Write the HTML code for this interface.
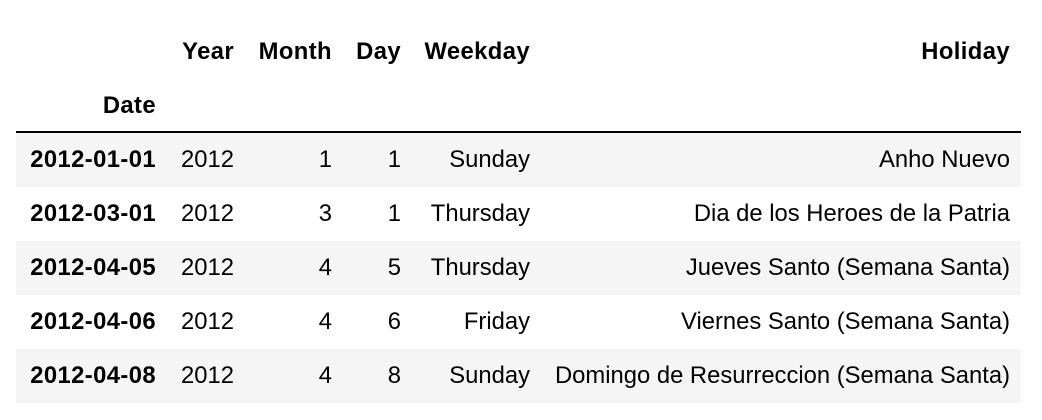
<!DOCTYPE html>
<html><head><style>
body{margin:0;width:1042px;height:420px;background:#fff;font-family:"Liberation Sans",Arial,sans-serif;font-size:23.8px;color:#000;position:relative;overflow:hidden}
.t{position:absolute;line-height:54px;height:54px;white-space:nowrap}
.r{text-align:right}
.b{font-weight:bold;letter-spacing:0.4px}
.s{position:absolute;left:16px;width:1005px;height:54px;background:#f5f5f5}
</style></head><body>
<div class="s" style="top:133px"></div>
<div class="s" style="top:241px"></div>
<div class="s" style="top:349px"></div>
<div style="position:absolute;left:16px;top:131px;width:1005px;height:2px;background:#000"></div>

<div class="t b r" style="top:25px;right:808px">Year</div>
<div class="t b r" style="top:25px;right:710px">Month</div>
<div class="t b r" style="top:25px;right:641px">Day</div>
<div class="t b r" style="top:25px;right:512px">Weekday</div>
<div class="t b r" style="top:25px;right:32px">Holiday</div>
<div class="t b r" style="top:79px;right:886px">Date</div>

<div class="t b r" style="top:133px;right:886px">2012-01-01</div>
<div class="t" style="top:133px;left:181px">2012</div>
<div class="t r" style="top:133px;right:710px">1</div>
<div class="t r" style="top:133px;right:641px">1</div>
<div class="t r" style="top:133px;right:512px">Sunday</div>
<div class="t r" style="top:133px;right:32px">Anho Nuevo</div>

<div class="t b r" style="top:187px;right:886px">2012-03-01</div>
<div class="t" style="top:187px;left:181px">2012</div>
<div class="t r" style="top:187px;right:710px">3</div>
<div class="t r" style="top:187px;right:641px">1</div>
<div class="t r" style="top:187px;right:512px">Thursday</div>
<div class="t r" style="top:187px;right:32px">Dia de los Heroes de la Patria</div>

<div class="t b r" style="top:241px;right:886px">2012-04-05</div>
<div class="t" style="top:241px;left:181px">2012</div>
<div class="t r" style="top:241px;right:710px">4</div>
<div class="t r" style="top:241px;right:641px">5</div>
<div class="t r" style="top:241px;right:512px">Thursday</div>
<div class="t r" style="top:241px;right:32px">Jueves Santo (Semana Santa)</div>

<div class="t b r" style="top:295px;right:886px">2012-04-06</div>
<div class="t" style="top:295px;left:181px">2012</div>
<div class="t r" style="top:295px;right:710px">4</div>
<div class="t r" style="top:295px;right:641px">6</div>
<div class="t r" style="top:295px;right:512px">Friday</div>
<div class="t r" style="top:295px;right:32px">Viernes Santo (Semana Santa)</div>

<div class="t b r" style="top:349px;right:886px">2012-04-08</div>
<div class="t" style="top:349px;left:181px">2012</div>
<div class="t r" style="top:349px;right:710px">4</div>
<div class="t r" style="top:349px;right:641px">8</div>
<div class="t r" style="top:349px;right:512px">Sunday</div>
<div class="t r" style="top:349px;right:32px">Domingo de Resurreccion (Semana Santa)</div>
</body></html>
